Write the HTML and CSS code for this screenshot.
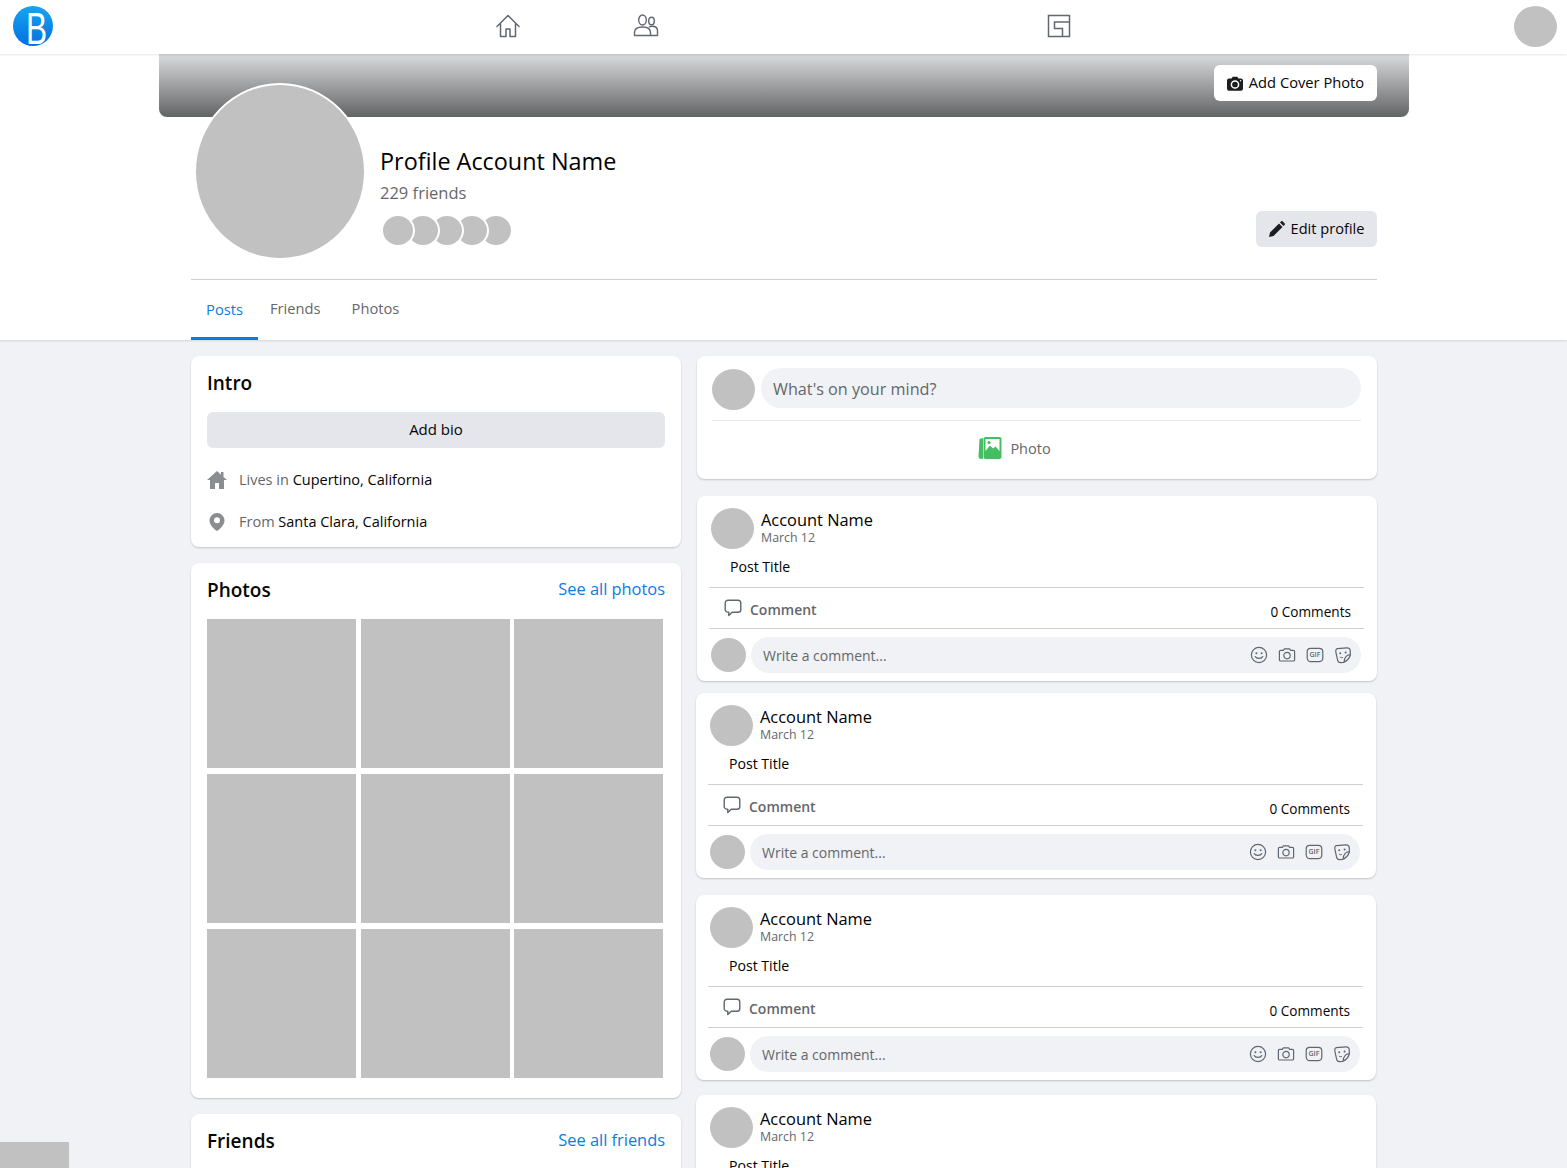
FILE: index.html
```html
<!DOCTYPE html>
<html lang="en">
<head>
    <meta charset="UTF-8">
    <meta name="viewport" content="width=device-width, initial-scale=1.0">
    <title>Profile Account Name</title>
    <link rel="stylesheet" href="styles.css">
</head>
<body>

    <svg class="sprite" width="0" height="0">
        <symbol id="i-comment" viewBox="0 0 18 18">
            <path d="M4 1.2h10a2.8 2.8 0 0 1 2.8 2.8v6.4a2.8 2.8 0 0 1-2.8 2.8H8.2l-3.4 3.4v-3.4H4a2.8 2.8 0 0 1-2.8-2.8V4A2.8 2.8 0 0 1 4 1.2z" fill="none" stroke="currentColor" stroke-width="1.4" stroke-linejoin="round"/>
        </symbol>
        <symbol id="i-smile" viewBox="0 0 18 18">
            <circle cx="9" cy="9" r="7.6" fill="none" stroke="currentColor" stroke-width="1.2"/>
            <circle cx="6.4" cy="7.2" r="1" fill="currentColor"/>
            <circle cx="11.6" cy="7.2" r="1" fill="currentColor"/>
            <path d="M5.2 10.6c1 2.4 6.6 2.4 7.6 0" fill="none" stroke="currentColor" stroke-width="1.2" stroke-linecap="round"/>
        </symbol>
        <symbol id="i-cam" viewBox="0 0 18 18">
            <path d="M2.6 4.4h2.8l1-1.6h5.2l1 1.6h2.8a1.2 1.2 0 0 1 1.2 1.2v8.2a1.2 1.2 0 0 1-1.2 1.2H2.6a1.2 1.2 0 0 1-1.2-1.2V5.6a1.2 1.2 0 0 1 1.2-1.2z" fill="none" stroke="currentColor" stroke-width="1.2" stroke-linejoin="round"/>
            <circle cx="9" cy="9.6" r="3.2" fill="none" stroke="currentColor" stroke-width="1.2"/>
        </symbol>
        <symbol id="i-gif" viewBox="0 0 18 18">
            <rect x="1.2" y="2.4" width="15.6" height="13.2" rx="3.5" fill="none" stroke="currentColor" stroke-width="1.2"/>
            <text x="9" y="11.4" text-anchor="middle" font-size="7" font-weight="600" fill="currentColor">GIF</text>
        </symbol>
        <symbol id="i-sticker" viewBox="0 0 18 18">
            <path d="M3.2 2.6l9.800-.8a3 3 0 0 1 3.200 2.800l.2 4.400c-1 3.200-3.600 6-6.800 7.400l-3 .2a3 3 0 0 1-3-2.400L1.800 5.800a3 3 0 0 1 1.400-3.200z" fill="none" stroke="currentColor" stroke-width="1.2" stroke-linejoin="round"/>
            <path d="M16.200 9c-2.800-.6-5.800 1.800-6 6.800" fill="none" stroke="currentColor" stroke-width="1.2"/>
            <circle cx="6.200" cy="7.200" r="1" fill="currentColor"/>
            <circle cx="11.600" cy="6.400" r="1" fill="currentColor"/>
            <path d="M5.800 11c1 .8 2 .8 3.200.4" fill="none" stroke="currentColor" stroke-width="1"/>
        </symbol>
    </svg>

    <header class="topbar">
        <div class="logo"><span class="logo-letter">B</span></div>
        <nav class="topnav">
            <svg class="topicon topicon-home" width="26" height="26" viewBox="0 0 26 26">
                <path d="M2 13.5 13 2.500l11 11M5.500 11v12.500h5.500V16h4v7.500h5.500V11" fill="none" stroke="#606770" stroke-width="1.5" stroke-linejoin="round" stroke-linecap="round"/>
            </svg>
            <svg class="topicon topicon-friends" width="26" height="26" viewBox="0 0 26 26">
                <ellipse cx="9.500" cy="7" rx="3.800" ry="5" fill="none" stroke="#606770" stroke-width="1.4"/>
                <ellipse cx="18.500" cy="8" rx="2.800" ry="3.800" fill="none" stroke="#606770" stroke-width="1.4"/>
                <path d="M1.500 22.500v-3c0-3.500 3-5.500 8-5.500s8 2 8 5.500v3z" fill="none" stroke="#606770" stroke-width="1.4" stroke-linejoin="round"/>
                <path d="M16 14c1-.6 2-.8 3-.8 3.500 0 5.500 2 5.500 4.500v4.800h-7" fill="none" stroke="#606770" stroke-width="1.4" stroke-linejoin="round"/>
            </svg>
            <svg class="topicon topicon-pages" width="24" height="24" viewBox="0 0 24 24">
                <rect x="1.500" y="1.500" width="21" height="21" fill="none" stroke="#606770" stroke-width="1.5"/>
                <path d="M22 8H7.500v6.500H15.500V22" fill="none" stroke="#606770" stroke-width="1.5"/>
            </svg>
        </nav>
        <div class="gray me"></div>
    </header>

    <section class="profile">
        <div class="cover">
            <button class="cover-btn">
                <svg width="16" height="15" viewBox="0 0 16 15"><path d="M2 2.500h2.500L5.700.8h4.600l1.200 1.700H14a2 2 0 0 1 2 2v8.300a2 2 0 0 1-2 2H2a2 2 0 0 1-2-2V4.500a2 2 0 0 1 2-2z" fill="#1c1e21"/><circle cx="8" cy="8.500" r="3.600" fill="none" stroke="#fff" stroke-width="1.5"/><circle cx="13.600" cy="4.700" r=".7" fill="#fff"/></svg>
                <span class="btn-text">Add Cover Photo</span>
            </button>
        </div>

        <div class="profile-inner">
            <div class="profile-head">
                <div class="gray profile-pic"></div>
                <div class="profile-info">
                    <h1 class="profile-name">Profile Account Name</h1>
                    <div class="profile-friends">229 friends</div>
                    <div class="faces">
                        <span class="gray face"></span>
                        <span class="gray face"></span>
                        <span class="gray face"></span>
                        <span class="gray face"></span>
                        <span class="gray face"></span>
                    </div>
                </div>
                <button class="edit-btn">
                    <svg width="16" height="16" viewBox="0 0 16 16"><path d="M0 16l1-4.500L10 2.500l3.500 3.500-9 9zM11 1.500 12.200.3a1 1 0 0 1 1.400 0l2.100 2.100a1 1 0 0 1 0 1.400L14.500 5z" fill="#1c1e21"/></svg>
                    <span class="btn-text">Edit profile</span>
                </button>
            </div>
            <div class="tabs">
                <a class="tab tab-active">Posts</a>
                <a class="tab">Friends</a>
                <a class="tab">Photos</a>
            </div>
        </div>
    </section>

    <main class="content">
        <div class="col-left">
            <div class="card intro">
                <h2 class="card-title">Intro</h2>
                <button class="bio-btn">Add bio</button>
                <div class="intro-row intro-row-first">
                    <svg width="20" height="18" viewBox="0 0 20 18"><path d="M10 0 0 9h3v9h5v-6h4v6h5V9h3l-3.500-3.100V1h-2.500v2.700z" fill="#8a8d91"/></svg>
                    <span class="intro-text">Lives in <b>Cupertino, California</b></span>
                </div>
                <div class="intro-row">
                    <svg width="20" height="18" viewBox="0 0 20 18"><path d="M10 0a7.500 7.500 0 0 0-7.500 7.500C2.500 12 7 16 10 18c3-2 7.500-6 7.500-10.500A7.500 7.500 0 0 0 10 0zm0 10.300a3 3 0 1 1 0-6 3 3 0 0 1 0 6z" fill="#8a8d91"/></svg>
                    <span class="intro-text">From <b>Santa Clara, California</b></span>
                </div>
            </div>

            <div class="card photos">
                <div class="card-head">
                    <h2 class="card-title">Photos</h2>
                    <a class="card-link">See all photos</a>
                </div>
                <div class="photo-grid">
                    <div class="gray"></div><div class="gray"></div><div class="gray"></div>
                    <div class="gray"></div><div class="gray"></div><div class="gray"></div>
                    <div class="gray"></div><div class="gray"></div><div class="gray"></div>
                </div>
            </div>

            <div class="card friends">
                <div class="card-head">
                    <h2 class="card-title">Friends</h2>
                    <a class="card-link">See all friends</a>
                </div>
            </div>
        </div>

        <div class="col-right">
            <div class="card composer">
                <div class="composer-top">
                    <div class="gray composer-pic"></div>
                    <div class="composer-input">What's on your mind?</div>
                </div>
                <div class="composer-action">
                    <svg width="24" height="24" viewBox="0 0 24 24">
                        <path d="M5 2 1.500 3 .5 20.500c0 1 .7 2 1.500 2.300L5 23z" fill="#45bd62"/>
                        <rect x="5.500" y="1" width="18" height="22" rx="2" fill="#45bd62"/>
                        <rect x="7.500" y="3" width="14" height="12" fill="#fff"/>
                        <circle cx="11" cy="6.500" r="1.600" fill="#45bd62"/>
                        <path d="M7.500 15 12 9.500l3 3 2.500-2 4 4.500v2h-14z" fill="#45bd62"/>
                    </svg>
                    <span>Photo</span>
                </div>
            </div>

            <article class="card post post-a">
                <div class="post-head">
                    <div class="gray post-pic"></div>
                    <div>
                        <div class="post-name">Account Name</div>
                        <div class="post-date">March 12</div>
                    </div>
                </div>
                <div class="post-title">Post Title</div>
                <div class="post-actions">
                    <svg class="comment-icon"><use href="#i-comment"/></svg>
                    <span class="comment-label">Comment</span>
                    <span class="comment-count">0 Comments</span>
                </div>
                <div class="post-reply">
                    <div class="gray reply-pic"></div>
                    <div class="reply-input">
                        <span class="reply-text">Write a comment...</span>
                        <svg class="reply-icon"><use href="#i-smile"/></svg>
                        <svg class="reply-icon"><use href="#i-cam"/></svg>
                        <svg class="reply-icon"><use href="#i-gif"/></svg>
                        <svg class="reply-icon"><use href="#i-sticker"/></svg>
                    </div>
                </div>
            </article>

            <article class="card post post-b">
                <div class="post-head">
                    <div class="gray post-pic"></div>
                    <div>
                        <div class="post-name">Account Name</div>
                        <div class="post-date">March 12</div>
                    </div>
                </div>
                <div class="post-title">Post Title</div>
                <div class="post-actions">
                    <svg class="comment-icon"><use href="#i-comment"/></svg>
                    <span class="comment-label">Comment</span>
                    <span class="comment-count">0 Comments</span>
                </div>
                <div class="post-reply">
                    <div class="gray reply-pic"></div>
                    <div class="reply-input">
                        <span class="reply-text">Write a comment...</span>
                        <svg class="reply-icon"><use href="#i-smile"/></svg>
                        <svg class="reply-icon"><use href="#i-cam"/></svg>
                        <svg class="reply-icon"><use href="#i-gif"/></svg>
                        <svg class="reply-icon"><use href="#i-sticker"/></svg>
                    </div>
                </div>
            </article>

            <article class="card post post-c">
                <div class="post-head">
                    <div class="gray post-pic"></div>
                    <div>
                        <div class="post-name">Account Name</div>
                        <div class="post-date">March 12</div>
                    </div>
                </div>
                <div class="post-title">Post Title</div>
                <div class="post-actions">
                    <svg class="comment-icon"><use href="#i-comment"/></svg>
                    <span class="comment-label">Comment</span>
                    <span class="comment-count">0 Comments</span>
                </div>
                <div class="post-reply">
                    <div class="gray reply-pic"></div>
                    <div class="reply-input">
                        <span class="reply-text">Write a comment...</span>
                        <svg class="reply-icon"><use href="#i-smile"/></svg>
                        <svg class="reply-icon"><use href="#i-cam"/></svg>
                        <svg class="reply-icon"><use href="#i-gif"/></svg>
                        <svg class="reply-icon"><use href="#i-sticker"/></svg>
                    </div>
                </div>
            </article>

            <article class="card post post-d">
                <div class="post-head">
                    <div class="gray post-pic"></div>
                    <div>
                        <div class="post-name">Account Name</div>
                        <div class="post-date">March 12</div>
                    </div>
                </div>
                <div class="post-title">Post Title</div>
            </article>
        </div>
    </main>

    <div class="gray corner-box"></div>

</body>
</html>
```

FILE: styles.css
```css
html, body {
    height: 1168px;
    overflow: hidden;
}

body {
    margin: 0;
    background-color: #f0f2f5;
    color: #050505;
    font-family: "Open Sans", "Liberation Sans", sans-serif;
    position: relative;
}

h1, h2 {
    margin: 0;
}

button {
    font-family: inherit;
    border: none;
    cursor: pointer;
}

.sprite {
    position: absolute;
}

.gray {
    background-color: #c1c1c1;
}

.btn-text {
    padding-bottom: 2px;
}

/* top bar */
.topbar {
    height: 54px;
    box-sizing: border-box;
    background-color: #fff;
    box-shadow: 0 1px 2px rgba(0, 0, 0, 0.1);
    display: flex;
    align-items: center;
    padding: 0 10px 0 13px;
    position: relative;
    z-index: 2;
}

.logo {
    width: 40px;
    height: 40px;
    margin-bottom: 2px;
    box-sizing: border-box;
    padding: 6px 0 0 8px;
    border-radius: 50%;
    background: linear-gradient(#16a5f0, #0270e2);
    color: #fff;
    display: flex;
    justify-content: center;
}

.logo-letter {
    font-family: "Liberation Sans", sans-serif;
    font-size: 44px;
    line-height: 34px;
    transform: scaleX(0.72);
}

.topnav {
    flex: 1;
    display: flex;
    align-items: center;
    padding: 0 0 2px 442px;
}

.topicon-friends {
    margin-left: 112px;
}

.topicon-pages {
    margin-left: 388px;
}

.me {
    width: 43px;
    height: 41px;
    margin-bottom: 1px;
    border-radius: 50%;
}

/* profile header */
.profile {
    height: 286px;
    background-color: #fff;
    box-shadow: 0 1px 2px rgba(0, 0, 0, 0.12);
    position: relative;
}

.cover {
    width: 1250px;
    height: 63px;
    margin-left: 159px;
    border-radius: 0 0 8px 8px;
    background: linear-gradient(#d3d4d6 6%, #636466);
    display: flex;
    justify-content: flex-end;
    align-items: flex-start;
    padding: 11px 32px 0 0;
    box-sizing: border-box;
}

.cover-btn {
    width: 163px;
    height: 36px;
    background-color: #fff;
    border-radius: 6px;
    font-size: 14.7px;
    color: #050505;
    display: flex;
    align-items: center;
    justify-content: center;
    gap: 6px;
}

.profile-inner {
    width: 1186px;
    margin-left: 191px;
}

.profile-head {
    height: 162px;
    display: flex;
    border-bottom: 1px solid #ced0d4;
}

.profile-pic {
    width: 168px;
    height: 173px;
    margin: -32px 0 0 5px;
    border-radius: 50%;
    box-shadow: 0 0 0 2px #fff;
    flex-shrink: 0;
    position: relative;
}

.profile-info {
    flex: 1;
    padding: 29px 0 0 16px;
}

.profile-name {
    font-size: 23.4px;
    font-weight: 400;
    line-height: 31px;
    color: #000;
}

.profile-friends {
    font-size: 16.5px;
    line-height: 22px;
    margin-top: 5px;
    color: #65676b;
}

.faces {
    display: flex;
    margin: 12px 0 0 3px;
}

.face {
    width: 30px;
    height: 29px;
    border-radius: 50%;
    box-shadow: 0 0 0 2px #fff;
    margin-right: -5.5px;
    position: relative;
}

.face:nth-child(1) { z-index: 5; }
.face:nth-child(2) { z-index: 4; }
.face:nth-child(3) { z-index: 3; }
.face:nth-child(4) { z-index: 2; }
.face:nth-child(5) { z-index: 1; }

.edit-btn {
    width: 121px;
    height: 36px;
    margin-top: 94px;
    background-color: #e4e6eb;
    border-radius: 6px;
    font-size: 14.6px;
    color: #050505;
    display: flex;
    align-items: center;
    justify-content: center;
    gap: 6px;
}

.tabs {
    display: flex;
    height: 60px;
    font-size: 14.7px;
}

.tab {
    display: flex;
    align-items: center;
    margin-left: 31px;
    padding-bottom: 4px;
    color: #65676b;
    font-weight: 500;
}

.tab-active {
    margin-left: 0;
    width: 67px;
    box-sizing: border-box;
    justify-content: center;
    padding-bottom: 0;
    color: #0a7ce6;
    border-bottom: 3px solid #0a7ce6;
}

.tab-active + .tab {
    margin-left: 12px;
}

/* columns */
.content {
    display: flex;
    gap: 16px;
    margin: 16px 0 0 191px;
    width: 1186px;
}

.col-left {
    width: 490px;
    flex-shrink: 0;
}

.col-right {
    width: 680px;
    flex-shrink: 0;
}

.card {
    background-color: #fff;
    border-radius: 8px;
    box-shadow: 0 1px 2px rgba(0, 0, 0, 0.2);
    box-sizing: border-box;
}

.card-title {
    font-size: 19px;
    font-weight: 600;
    line-height: 24px;
}

.card-head {
    display: flex;
    justify-content: space-between;
    align-items: center;
    height: 24px;
}

.card-link {
    font-size: 16.4px;
    line-height: 22px;
    margin-bottom: 2px;
    color: #0a7ce6;
}

/* intro */
.intro {
    height: 191px;
    padding: 15px 16px 16px;
}

.bio-btn {
    display: block;
    width: 100%;
    height: 36px;
    margin-top: 17px;
    padding: 0 0 3px;
    background-color: #e4e6eb;
    border-radius: 6px;
    font-size: 15px;
    color: #050505;
}

.intro-row {
    display: flex;
    align-items: center;
    gap: 12px;
    height: 18px;
    margin-top: 24px;
    font-size: 14.5px;
    color: #65676b;
}

.intro-row-first {
    margin-top: 23px;
}

.intro-text {
    padding-bottom: 2px;
}

.intro-row b {
    font-weight: 400;
    color: #050505;
}

/* photos */
.photos {
    height: 535px;
    margin-top: 16px;
    padding: 15px 16px 0;
}

.photo-grid {
    display: grid;
    grid-template-columns: repeat(3, 149px);
    grid-auto-rows: 149px;
    gap: 6px 4.5px;
    margin-top: 17px;
}

.friends {
    height: 120px;
    margin-top: 16px;
    padding: 15px 16px;
}

/* new post */
.composer {
    height: 123px;
    padding: 12px 16px 0 15px;
}

.composer-top {
    display: flex;
    gap: 6px;
    height: 52px;
    border-bottom: 1px solid #e4e6eb;
}

.composer-pic {
    width: 43px;
    height: 41px;
    margin-top: 1px;
    border-radius: 50%;
}

.composer-input {
    flex: 1;
    height: 40px;
    padding-left: 12px;
    border-radius: 20px;
    background-color: #f0f2f5;
    color: #65676b;
    font-size: 16.2px;
    line-height: 42px;
}

.composer-action {
    display: flex;
    justify-content: center;
    align-items: center;
    gap: 8px;
    height: 56px;
    padding-right: 44px;
    padding-bottom: 2px;
    box-sizing: border-box;
    font-size: 14.5px;
    color: #65676b;
    font-weight: 500;
}

/* posts */
.post {
    height: 185px;
    padding: 12px 13px 0 14px;
}

.post-a {
    margin-top: 17px;
}

.post-b,
.post-c,
.post-d {
    margin-left: -1px;
    margin-right: 1px;
}

.post-b { margin-top: 12px; }
.post-c { margin-top: 17px; }
.post-d { margin-top: 15px; }

.post-head {
    display: flex;
    gap: 7px;
    height: 41px;
}

.post-pic {
    width: 43px;
    height: 41px;
    border-radius: 50%;
}

.post-name {
    font-size: 16.4px;
    line-height: 20px;
    margin-top: 2px;
    color: #000;
}

.post-date {
    font-size: 12.4px;
    line-height: 15px;
    color: #65676b;
}

.post-title {
    font-size: 14.1px;
    line-height: 20px;
    margin: 8px 0 0 19px;
    color: #000;
}

.post-actions {
    display: flex;
    align-items: center;
    height: 40px;
    box-sizing: content-box;
    margin: 10px 0 0 -2px;
    padding: 0 13px 0 15px;
    border-top: 1px solid #ced0d4;
    border-bottom: 1px solid #ced0d4;
}

.comment-icon {
    width: 18px;
    height: 18px;
    color: #606770;
}

.comment-label {
    margin-left: 8px;
    padding-top: 2px;
    font-size: 14px;
    font-weight: 600;
    color: #65676b;
}

.comment-count {
    margin-left: auto;
    padding-top: 6px;
    font-size: 13.6px;
    color: #050505;
}

.post-reply {
    display: flex;
    align-items: center;
    gap: 5px;
    margin: 8px 3px 0 0;
}

.reply-pic {
    width: 35px;
    height: 34px;
    border-radius: 50%;
    flex-shrink: 0;
}

.reply-input {
    flex: 1;
    display: flex;
    align-items: center;
    gap: 10px;
    height: 36px;
    padding: 0 9px 0 12px;
    border-radius: 18px;
    background-color: #f0f2f5;
    color: #65676b;
    font-size: 14px;
}

.reply-text {
    margin-right: auto;
}

.reply-icon {
    width: 18px;
    height: 18px;
    color: #606770;
}

.corner-box {
    position: absolute;
    left: 0;
    bottom: 0;
    width: 69px;
    height: 26px;
}
```
